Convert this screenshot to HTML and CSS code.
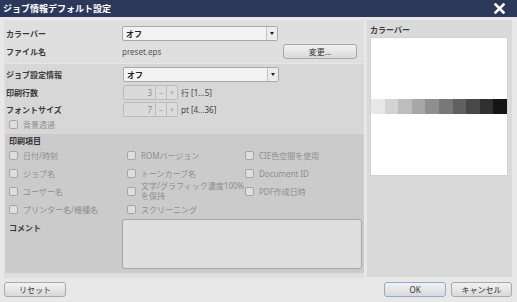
FILE: index.html
```html
<!DOCTYPE html>
<html lang="ja">
<head>
  <meta charset="UTF-8">
  <title>ジョブ情報デフォルト設定</title>
  <link rel="stylesheet" href="styles.css">
</head>
<body>
  <div class="dialog">
    <div class="titlebar">
      <span>ジョブ情報デフォルト設定</span>
      <svg class="close" width="11" height="11" viewBox="0 0 11 11">
        <path d="M1.5 1.5 L9.5 9.5 M9.5 1.5 L1.5 9.5" stroke="#fff" stroke-width="2.6" stroke-linecap="square"/>
      </svg>
    </div>

    <div class="content">
      <div class="left">
        <div class="row">
          <div class="label">カラーバー</div>
          <div class="select"><span>オフ</span><i class="arrow"></i></div>
        </div>
        <div class="row">
          <div class="label">ファイル名</div>
          <div class="value">preset.eps</div>
          <button class="btn change-btn">変更...</button>
        </div>

        <div class="section job">
          <div class="row r18">
            <div class="label">ジョブ設定情報</div>
            <div class="select"><span>オフ</span><i class="arrow"></i></div>
          </div>
          <div class="row r18">
            <div class="label">印刷行数</div>
            <div class="spinner">
              <span class="num">3</span><span class="step">−</span><span class="step">+</span>
            </div>
            <span class="unit">行 [1...5]</span>
          </div>
          <div class="row r17">
            <div class="label">フォントサイズ</div>
            <div class="spinner">
              <span class="num">7</span><span class="step">−</span><span class="step">+</span>
            </div>
            <span class="unit">pt [4...36]</span>
          </div>
          <div class="row r16 check-row">
            <label class="check"><i class="box"></i>背景透過</label>
          </div>
        </div>

        <div class="section items">
          <div class="items-title">印刷項目</div>
          <div class="grid">
            <label class="check"><i class="box"></i>日付/時刻</label>
            <label class="check"><i class="box"></i>ROMバージョン</label>
            <label class="check"><i class="box"></i>CIE色空間を使用</label>
            <label class="check"><i class="box"></i>ジョブ名</label>
            <label class="check"><i class="box"></i>トーンカーブ名</label>
            <label class="check"><i class="box"></i>Document ID</label>
            <label class="check"><i class="box"></i>ユーザー名</label>
            <label class="check"><i class="box"></i><span class="two">文字/グラフィック濃度100%<br>を保持</span></label>
            <label class="check"><i class="box"></i>PDF作成日時</label>
            <label class="check"><i class="box"></i>プリンター名/機種名</label>
            <label class="check"><i class="box"></i>スクリーニング</label>
            <span></span>
          </div>
          <div class="comment">
            <div class="label">コメント</div>
            <div class="textarea"></div>
          </div>
        </div>
      </div>

      <div class="right">
        <div class="panel-title">カラーバー</div>
        <div class="preview">
          <div class="ramp">
            <span style="background:#e8e8e8"></span>
            <span style="background:#d3d3d3"></span>
            <span style="background:#bdbdbd"></span>
            <span style="background:#a7a7a7"></span>
            <span style="background:#8f8f8f"></span>
            <span style="background:#787878"></span>
            <span style="background:#606060"></span>
            <span style="background:#484848"></span>
            <span style="background:#303030"></span>
            <span style="background:#151515"></span>
          </div>
        </div>
      </div>
    </div>

    <div class="footer">
      <button class="btn reset-btn">リセット</button>
      <div class="footer-right">
        <button class="btn ok-btn">OK</button>
        <button class="btn cancel-btn">キャンセル</button>
      </div>
    </div>
  </div>
</body>
</html>
```

FILE: styles.css
```css
* {
  box-sizing: border-box;
}

body {
  margin: 0;
  font-family: "Noto Sans", "Noto Sans CJK JP", sans-serif;
  font-size: 8px;
  color: #333;
  background-color: #e8e8e8;
}

.dialog {
  width: 517px;
  height: 302px;
  display: flex;
  flex-direction: column;
}

.titlebar {
  height: 17px;
  background-color: #2b3859;
  color: #fff;
  font-family: "Noto Sans CJK JP", sans-serif;
  font-size: 9px;
  font-weight: bold;
  display: flex;
  align-items: center;
  justify-content: space-between;
  padding: 0 12px 0 3px;
}

.content {
  display: flex;
  gap: 2px;
  height: 261px;
  padding: 3px 5px 0 4px;
}

.left {
  width: 360px;
  background-color: #dfdfdf;
  padding-top: 4px;
  display: flex;
  flex-direction: column;
}

.row {
  display: flex;
  align-items: center;
  height: 18px;
}

.r17 { height: 17px; }
.r16 { height: 16px; }

.label {
  width: 118px;
  flex: none;
  padding-left: 2px;
  font-weight: bold;
  color: #3a3a3a;
}

.value {
  color: #555;
}

.select {
  width: 156px;
  height: 15px;
  background-color: #f3f3f3;
  border: 1px solid #a9a9a9;
  border-radius: 2px;
  display: flex;
  align-items: center;
  font-weight: bold;
  color: #222;
}

.select span {
  flex: 1;
  padding-left: 3px;
}

.select .arrow {
  width: 11px;
  height: 13px;
  border-left: 1px solid #c4c4c4;
  background-color: #ececec;
  position: relative;
}

.select .arrow::after {
  content: "";
  position: absolute;
  left: 3px;
  top: 5px;
  border-left: 2.5px solid transparent;
  border-right: 2.5px solid transparent;
  border-top: 3px solid #222;
}

.btn {
  font-family: "Noto Sans", "Noto Sans CJK JP", sans-serif;
  font-size: 8px;
  color: #333;
  height: 15px;
  padding: 0;
  border: 1px solid #a8a8a8;
  border-radius: 3px;
  background: linear-gradient(#f2f2f2, #d9d9d9);
}

.change-btn {
  width: 74px;
  margin-left: auto;
  margin-right: 7px;
}

.section {
  margin-left: 1px;
}

.job {
  margin-top: 3px;
  padding-top: 1px;
  background-color: #d7d7d7;
  border-top: 1px solid #e6e6e6;
}

.job .label {
  padding-left: 1px;
}

.spinner {
  display: flex;
  height: 15px;
}

.spinner .num {
  width: 33px;
  border: 1px solid #bcbcbc;
  border-radius: 2px 0 0 2px;
  background-color: #dadada;
  color: #8c8c8c;
  text-align: right;
  padding-right: 3px;
  line-height: 13px;
}

.spinner .step {
  width: 11px;
  border: 1px solid #bcbcbc;
  border-left: none;
  background-color: #dcdcdc;
  color: #9a9a9a;
  text-align: center;
  line-height: 13px;
}

.spinner .step:last-child {
  border-radius: 0 2px 2px 0;
}

.unit {
  margin-left: 3px;
  color: #444;
}

.check-row {
  padding-left: 4px;
  padding-bottom: 3px;
}

.check {
  display: flex;
  align-items: center;
  color: #8e8e8e;
  white-space: nowrap;
}

.check .box {
  width: 9px;
  height: 9px;
  flex: none;
  border: 1px solid #a6a6a6;
  border-radius: 2px;
  background-color: #dedede;
  margin-right: 5px;
}

.check .two {
  line-height: 10px;
}

.items {
  background-color: #cbcbcb;
  padding: 0 2px 4px 4px;
}

.items-title {
  height: 12px;
  line-height: 13px;
  font-weight: bold;
  color: #333;
}

.grid {
  display: grid;
  grid-template-columns: 118px 118px 118px;
  grid-auto-rows: 18px;
}

.comment {
  display: flex;
  margin-top: 1px;
}

.comment .label {
  width: 113px;
  padding: 3px 0 0 0;
}

.textarea {
  width: 240px;
  height: 50px;
  background-color: #dfdfdf;
  border: 1px solid #a5a5a5;
  border-radius: 3px;
}

.right {
  width: 146px;
  height: 257px;
  background-color: #dadada;
  border-left: 1px solid #e4e4e4;
  padding: 4px 4px 0 3px;
}

.panel-title {
  height: 13px;
  font-weight: bold;
  color: #3a3a3a;
}

.preview {
  width: 138px;
  height: 139px;
  background-color: #fff;
  border: 1px solid #d2d2d2;
  padding-top: 61px;
}

.ramp {
  display: grid;
  grid-template-columns: repeat(10, 1fr);
  height: 15px;
}

.footer {
  display: flex;
  justify-content: space-between;
  padding: 4px 5px 0 4px;
}

.reset-btn {
  width: 62px;
}

.footer-right {
  display: flex;
  gap: 5px;
}

.ok-btn {
  width: 62px;
  border-color: #8fa9d6;
}

.cancel-btn {
  width: 61px;
}
```
